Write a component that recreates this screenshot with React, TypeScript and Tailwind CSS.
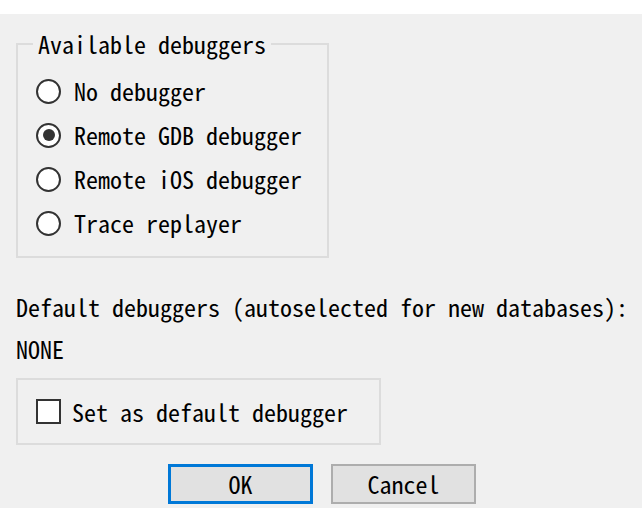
import React from "react";

const FONT = "font-['Noto_Sans_Mono_CJK_SC','Liberation_Mono',monospace]";

function Radio({ label, checked }: { label: string; checked?: boolean }) {
  return (
    <div className="flex h-[44px] items-center">
      <div className="flex h-[25px] w-[25px] items-center justify-center rounded-full border-2 border-[#333333] bg-white">
        {checked && <div className="h-[12px] w-[12px] rounded-full bg-[#333333]" />}
      </div>
      <span className="ml-[13px] leading-[24px]">{label}</span>
    </div>
  );
}

export default function App() {
  return (
    <div className={`h-[508px] w-[642px] overflow-hidden bg-[#f0f0f0] text-[24px] text-black ${FONT}`}>
      <div className="h-[14px] bg-white" />
      <div className="pl-[16px]">
        <fieldset className="mt-[18px] w-[313px] border-2 border-[#dcdcdc] pl-[18px] pb-[11px] pt-[13px]">
          <legend className="ml-[-3px] px-[5px] leading-[24px]">Available debuggers</legend>
          <Radio label="No debugger" />
          <Radio label="Remote GDB debugger" checked />
          <Radio label="Remote iOS debugger" />
          <Radio label="Trace replayer" />
        </fieldset>
        <div className="mt-[37px] whitespace-nowrap leading-[24px]">Default debuggers (autoselected for new databases):</div>
        <div className="mt-[18px] leading-[24px]">NONE</div>
        <div className="mt-[17px] flex h-[67px] w-[365px] items-center border-2 border-[#dcdcdc] pl-[18px]">
          <div className="h-[25px] w-[25px] border-2 border-[#333333] bg-white" />
          <span className="ml-[11px] leading-[24px]">Set as default debugger</span>
        </div>
      </div>
      <div className="mt-[19px] flex justify-center gap-[18px] pl-[2px]">
        <button className="flex h-[40px] w-[145px] items-center justify-center border-[3px] border-[#0078d7] bg-[#e1e1e1] leading-[24px]">
          OK
        </button>
        <button className="flex h-[40px] w-[145px] items-center justify-center border-2 border-[#adadad] bg-[#e1e1e1] leading-[24px]">
          Cancel
        </button>
      </div>
    </div>
  );
}
